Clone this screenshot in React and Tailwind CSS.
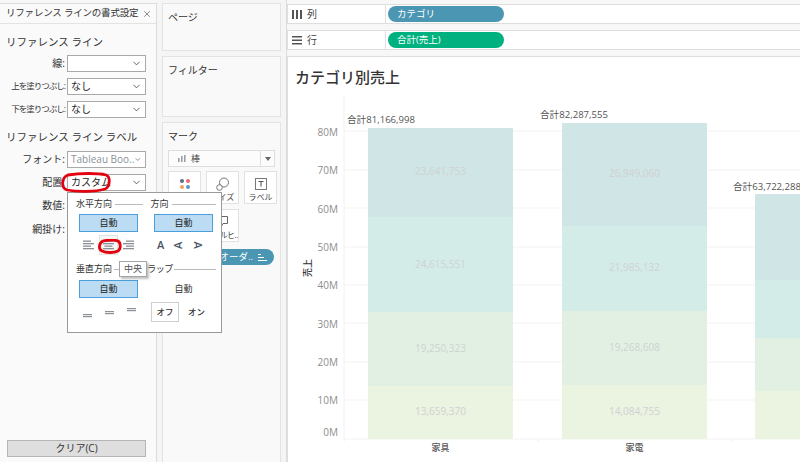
import React from "react";
import { ChevronDown, X } from "lucide-react";

const FONT = { fontFamily: '"Open Sans", "Noto Sans CJK JP", sans-serif' };

const GRID = [131, 170, 208, 247, 285, 323, 362, 400, 439];
const TICKS = [
  ["80M", 132],
  ["70M", 170],
  ["60M", 209],
  ["50M", 247],
  ["40M", 285],
  ["30M", 324],
  ["20M", 362],
  ["10M", 400],
  ["0M", 432],
];
const COLORS = ["#cfe5e6", "#d4ece8", "#e2f0e3", "#ebf3e1"];
const BARS = [
  {
    name: "家具",
    x: 368,
    w: 145,
    total: "合計81,166,998",
    totalX: 347,
    totalY: 120,
    edges: [128, 217, 312, 386, 439],
    values: ["23,641,753", "24,615,551", "19,250,323", "13,659,370"],
    labelY: [172, 265, 349, 412],
  },
  {
    name: "家電",
    x: 562,
    w: 145,
    total: "合計82,287,555",
    totalX: 540,
    totalY: 115,
    edges: [123, 226, 311, 385, 439],
    values: ["26,949,060", "21,985,132", "19,268,608", "14,084,755"],
    labelY: [174, 268, 348, 412],
  },
  {
    name: "",
    x: 755,
    w: 60,
    total: "合計63,722,288",
    totalX: 733,
    totalY: 187,
    edges: [194, 280, 338, 391, 439],
    values: [],
    labelY: [],
  },
];

function Field({ label, value, muted, tight }) {
  return (
    <div className="flex items-center h-[16px]">
      <span
        className={`w-[66px] pr-[1px] text-right text-[#333] whitespace-nowrap ${
          tight ? "text-[8.5px] tracking-[-1px]" : "text-[10px]"
        }`}
      >
        {label}
      </span>
      <div className="ml-[1px] w-[79px] h-[17px] border border-[#a9a9a9] bg-white flex items-center pl-[3px] pr-[3px]">
        <span className={`flex-1 text-[10px] whitespace-nowrap ${muted ? "text-[#8a9299]" : "text-[#222]"}`}>{value}</span>
        <ChevronDown size={11} className="text-[#555]" />
      </div>
    </div>
  );
}

function AutoButton({ children }) {
  return (
    <div className="w-[59px] h-[18px] bg-[#bcdcf4] border border-[#4a9fdc] flex items-center justify-center text-[9px] text-[#222]">
      {children}
    </div>
  );
}

function AlignIcon({ kind }) {
  const short = kind === "left" ? 0 : kind === "center" ? 1.5 : 3;
  return (
    <svg width="11" height="10" viewBox="0 0 11 10">
      {[0.5, 3, 5.5, 8].map((y, i) => (
        <rect key={y} x={i % 2 ? 0 : short} y={y} width={i % 2 ? 11 : 8} height="1.3" fill="#8b9096" />
      ))}
    </svg>
  );
}

function Tile({ label, tight, children }) {
  return (
    <div className="w-[33px] h-[33px] bg-white border border-[#e2e2e2] flex flex-col items-center pt-[5px] overflow-hidden">
      <div className="h-[14px] flex items-center">{children}</div>
      <span className={`text-[8px] leading-[12px] text-[#444] whitespace-nowrap ${tight ? "tracking-[-0.6px]" : ""}`}>{label}</span>
    </div>
  );
}

function Card({ title, className, children }) {
  return (
    <div className={`bg-[#f9f9f9] border border-[#e3e3e3] ${className}`}>
      <div className="text-[10px] text-[#333] pl-[5px] pt-[6px] leading-[14px]">{title}</div>
      {children}
    </div>
  );
}

function ShelfRow({ icon, label, pill, color }) {
  return (
    <div className="h-[20px] flex bg-white border border-[#dedede] border-r-0">
      <div className="w-[98px] flex items-center pl-[4px] gap-[5px] border-r border-[#dedede] text-[10px] text-[#444]">
        {icon}
        <span>{label}</span>
      </div>
      <div className="flex items-center pl-[2px]">
        <div className={`w-[116px] h-[16px] rounded-full ${color} text-white text-[9.5px] pl-[9px] flex items-center`}>{pill}</div>
      </div>
    </div>
  );
}

function Popup() {
  return (
    <div className="absolute left-[67px] top-[192px] w-[155px] h-[141px] bg-white border border-[#9a9a9a] pl-[8px] pr-[5px] pt-[5px] text-[#333] z-10">
      <div className="flex h-[12px] items-center text-[9px]">
        <span className="w-[39px] whitespace-nowrap">水平方向</span>
        <span className="w-[28px] h-px bg-[#bbb]" />
        <span className="ml-[8px] w-[22px] whitespace-nowrap">方向</span>
        <span className="w-[44px] h-px bg-[#bbb]" />
      </div>
      <div className="flex gap-[16px] pl-[3px] mt-[4px]">
        <AutoButton>自動</AutoButton>
        <AutoButton>自動</AutoButton>
      </div>
      <div className="flex mt-[3px] h-[20px] items-center">
        <div className="flex w-[75px] items-center pl-[7px] gap-[9px]">
          <AlignIcon kind="left" />
          <div className="w-[19px] h-[20px] -mx-[4px] border border-[#e2e2e2] bg-[#f6f6f6] flex items-center justify-center">
            <AlignIcon kind="center" />
          </div>
          <AlignIcon kind="right" />
        </div>
        <div className="flex gap-[11px] pl-[6px] text-[11px] font-semibold text-[#4b5563]">
          <span>A</span>
          <span className="-rotate-90">A</span>
          <span className="rotate-90">A</span>
        </div>
      </div>
      <div className="flex h-[12px] items-center text-[9px] mt-[8px]">
        <span className="w-[39px] whitespace-nowrap">垂直方向</span>
        <span className="w-[35px] h-px bg-[#bbb]" />
        <span className="w-[26px] whitespace-nowrap tracking-[-0.5px]">ラップ</span>
        <span className="ml-[1px] w-[44px] h-px bg-[#bbb]" />
      </div>
      <div className="flex gap-[16px] pl-[3px] mt-[5px]">
        <AutoButton>自動</AutoButton>
        <div className="w-[59px] h-[18px] flex items-center justify-center text-[9px]">自動</div>
      </div>
      <div className="flex mt-[4px] items-center">
        <div className="w-[75px] pl-[6px] flex gap-[11px]">
          {[7, 4, 1].map((y) => (
            <svg key={y} width="11" height="11" viewBox="0 0 11 11">
              <rect x="1" y={y} width="9" height="1.2" fill="#8b9096" />
              <rect x="1" y={y + 2} width="9" height="1.2" fill="#8b9096" />
            </svg>
          ))}
        </div>
        <div className="w-[28px] h-[20px] border border-[#cfcfcf] flex items-center justify-center text-[8.5px] font-medium">オフ</div>
        <span className="ml-[9px] text-[8.5px] font-medium">オン</span>
      </div>
    </div>
  );
}

function Chart() {
  return (
    <svg viewBox="288 57 512 405" width="512" height="405" className="block" style={FONT}>
      {GRID.map((y) => (
        <line key={y} x1="344" x2="800" y1={y} y2={y} stroke="#f3f3f3" />
      ))}
      <line x1="344" x2="344" y1="96" y2="442" stroke="#f2f2f2" />
      <line x1="538" x2="538" y1="439" y2="442" stroke="#eee" />
      <line x1="732" x2="732" y1="439" y2="442" stroke="#eee" />
      {TICKS.map(([t, y]) => (
        <text key={t} x="338" y={y + 3.5} textAnchor="end" fontSize="10" fill="#8d8d8d">{t}</text>
      ))}
      <text transform="translate(311 268) rotate(-90)" textAnchor="middle" fontSize="9" fontWeight="500" fill="#333">売上</text>
      {BARS.map((bar) => (
        <g key={bar.x}>
          {COLORS.map((c, i) => (
            <rect key={c} x={bar.x} y={bar.edges[i]} width={bar.w} height={bar.edges[i + 1] - bar.edges[i]} fill={c} />
          ))}
          {bar.values.map((v, i) => (
            <text key={v} x={bar.x + bar.w / 2} y={bar.labelY[i] + 3} textAnchor="middle" fontSize="10" fill="#cfd2d2">{v}</text>
          ))}
          <text x={bar.totalX} y={bar.totalY + 3} fontSize="9.6" fill="#555">{bar.total}</text>
          <text x={bar.x + bar.w / 2} y="451" textAnchor="middle" fontSize="9" fontWeight="500" fill="#555">{bar.name}</text>
        </g>
      ))}
    </svg>
  );
}

export default function App() {
  return (
    <div className="relative w-[800px] h-[462px] overflow-hidden bg-[#f7f7f7] flex" style={FONT}>
      {/* left format pane */}
      <div className="w-[157px] mt-[3px] bg-[#fafafa] border-t border-r border-[#dcdcdc] flex flex-col">
        <div className="h-[20px] flex items-center justify-between pl-[6px] pr-[4px] border-b border-[#e3e3e3] text-[#333]">
          <span className="text-[9.5px] tracking-[-0.2px] whitespace-nowrap">リファレンス ラインの書式設定</span>
          <X size={10} className="text-[#777]" />
        </div>
        <div className="pt-[11px] pl-[6px] text-[10.5px] leading-[14px] text-[#333]">リファレンス ライン</div>
        <div className="flex flex-col gap-[7px] mt-[6px]">
          <Field label="線:" value="" />
          <Field label="上を塗りつぶし:" value="なし" tight />
          <Field label="下を塗りつぶし:" value="なし" tight />
        </div>
        <div className="pt-[13px] pl-[6px] text-[10.5px] leading-[14px] text-[#333]">リファレンス ライン ラベル</div>
        <div className="flex flex-col gap-[7px] mt-[7px]">
          <Field label="フォント:" value="Tableau Boo.." muted />
          <Field label="配置:" value="カスタム" />
          <div className="h-[16px] mt-[1px] w-[66px] pr-[1px] text-right text-[10px] text-[#333]">数値:</div>
          <div className="h-[16px] mt-[1px] w-[66px] pr-[1px] text-right text-[10px] text-[#333]">網掛け:</div>
        </div>
        <div className="mt-auto mb-[5px] ml-[7px] mr-[10px] h-[17px] bg-[#dedede] border border-[#b5b5b5] flex items-center justify-center text-[10px] text-[#333]">
          クリア(C)
        </div>
      </div>

      {/* pages / filters / marks */}
      <div className="w-[130px] bg-[#f5f5f5] border-r border-[#dcdcdc] px-[5px] pt-[3px] flex flex-col gap-[5px]">
        <Card title="ページ" className="h-[48px]" />
        <Card title="フィルター" className="h-[61px]" />
        <Card title="マーク" className="flex-1 -mb-[2px]">
          <div className="mx-[5px] mt-[7px] h-[17px] bg-[#fcfcfc] border border-[#dedede] flex items-center">
            <div className="flex-1 flex items-center pl-[9px] gap-[5px] text-[9px] text-[#444]">
              <svg width="8" height="7" viewBox="0 0 8 7">
                <path d="M0 3h1.6v4H0zM3 1h1.6v6H3zM6 0h1.6v7H6z" fill="#9aa0a6" />
              </svg>
              <span>棒</span>
            </div>
            <div className="w-[14px] h-full border-l border-[#dedede] flex items-center justify-center">
              <span className="border-x-[3px] border-x-transparent border-t-[4px] border-t-[#666]" />
            </div>
          </div>
          <div className="grid grid-cols-[33px_33px_33px] gap-x-[5px] gap-y-[5px] pl-[5px] mt-[4px]">
            <Tile>
              <svg width="12" height="12" viewBox="0 0 12 12">
                <circle cx="3" cy="3" r="2" fill="#5f6b8c" />
                <circle cx="9" cy="3" r="2" fill="#e66a6a" />
                <circle cx="3" cy="9" r="2" fill="#f0a15f" />
                <circle cx="9" cy="9" r="2" fill="#5f94c4" />
              </svg>
            </Tile>
            <Tile label="サイズ">
              <svg width="13" height="14" viewBox="0 0 13 14" fill="none" stroke="#666" strokeWidth="0.9">
                <circle cx="8" cy="5.5" r="4.5" fill="#fff" />
                <circle cx="3.5" cy="10.5" r="2.8" fill="#fff" />
              </svg>
            </Tile>
            <Tile label="ラベル">
              <svg width="12" height="12" viewBox="0 0 12 12" fill="none">
                <rect x="0.5" y="0.5" width="11" height="11" stroke="#777" />
                <path d="M3.5 3.5h5M6 3.5v5" stroke="#555" strokeWidth="1.1" />
              </svg>
            </Tile>
            <Tile />
            <Tile label="ツールヒ…" tight>
              <svg width="10" height="12" viewBox="0 0 10 12" fill="none" stroke="#666">
                <path d="M0.5 0.5h9v7H5L3 11V7.5H0.5z" />
              </svg>
            </Tile>
          </div>
          <div className="ml-[5px] mt-[7px] w-[106px] h-[16px] rounded-full bg-[#4b96b3] text-white text-[9.5px] flex items-center justify-end pr-[7px] gap-[5px]">
            <span>オーダ..</span>
            <svg width="9" height="9" viewBox="0 0 9 9">
              <path d="M0 1h3v1H0zM0 4h6v1H0zM0 7h9v1H0z" fill="#fff" />
            </svg>
          </div>
        </Card>
      </div>

      {/* shelves and view */}
      <div className="flex-1 min-w-0 pt-[4px] flex flex-col">
        <div className="flex flex-col gap-[6px]">
          <ShelfRow
            label="列"
            pill="カテゴリ"
            color="bg-[#4b96b3]"
            icon={
              <svg width="10" height="9" viewBox="0 0 10 9">
                <path d="M0 0h2v9H0zM4 0h2v9H4zM8 0h2v9H8z" fill="#555" />
              </svg>
            }
          />
          <ShelfRow
            label="行"
            pill="合計(売上)"
            color="bg-[#00b180]"
            icon={
              <svg width="10" height="9" viewBox="0 0 10 9">
                <path d="M0 0h10v1.6H0zM0 3.5h10v1.6H0zM0 7h10v1.6H0z" fill="#555" />
              </svg>
            }
          />
        </div>
        <div className="mt-[6px] flex-1 bg-white border-t border-l border-[#dedede] relative">
          <div className="absolute left-[7px] top-[10px] text-[15px] leading-[20px] font-medium text-[#333]">カテゴリ別売上</div>
          <Chart />
        </div>
      </div>

      <Popup />

      {/* tooltip over the popup */}
      <div className="absolute left-[119px] top-[261px] w-[28px] h-[16px] bg-white border border-[#a5a5a5] shadow-[2px_2px_2px_rgba(0,0,0,0.25)] flex items-center justify-center text-[9px] text-[#555] z-20">
        中央
      </div>

      {/* hand drawn red marks */}
      <svg className="absolute left-[60px] top-[172px] z-20" width="52" height="22" viewBox="0 0 52 22" fill="none">
        <path d="M8 3C20 1 38 1 46 3c5 2 4 12-1 14-10 3-28 3-38 1C1 16 1 6 8 3z" stroke="#e3000f" strokeWidth="2.8" />
      </svg>
      <svg className="absolute left-[98px] top-[239px] z-20" width="24" height="15" viewBox="0 0 24 15" fill="none">
        <path d="M5 2c5-1 12-1 15 0 3 2 3 8 0 10-4 2-12 2-16 0C0 10 1 4 5 2z" stroke="#e3000f" strokeWidth="2.8" />
      </svg>
    </div>
  );
}
